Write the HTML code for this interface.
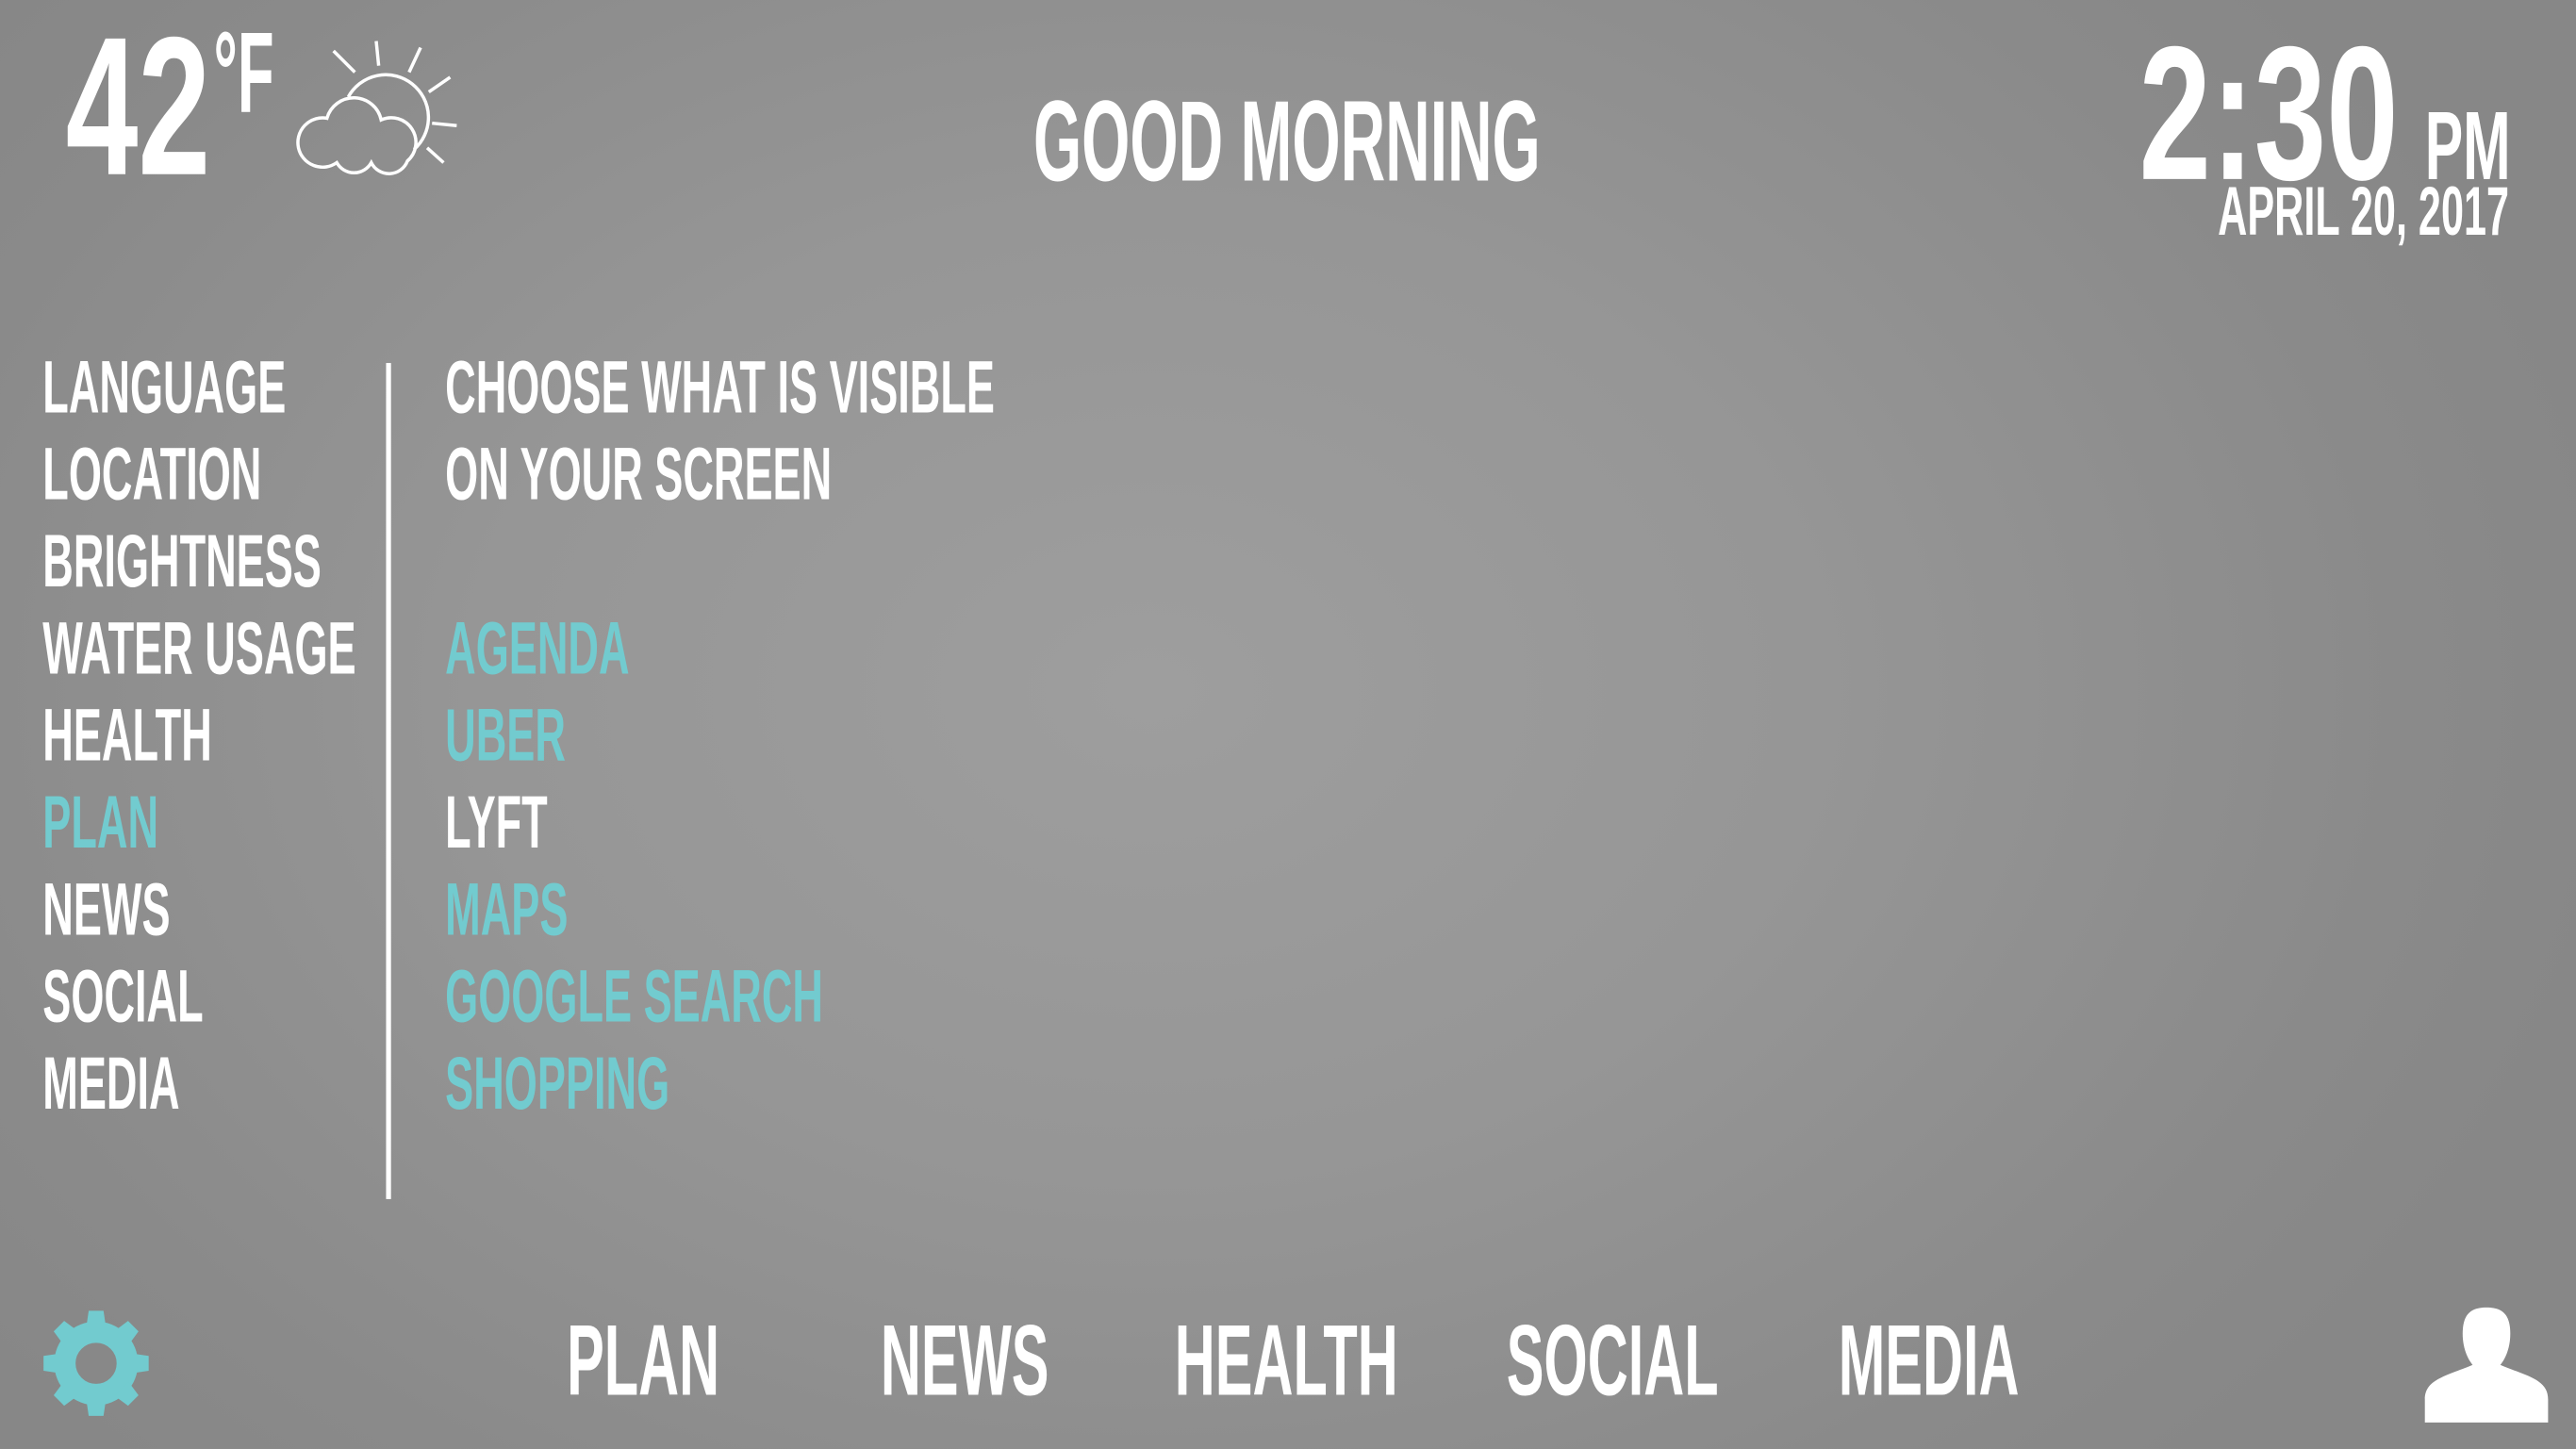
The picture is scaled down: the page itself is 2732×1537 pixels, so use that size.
<!DOCTYPE html>
<html><head><meta charset="utf-8"><style>
html,body{margin:0;padding:0;width:2732px;height:1536px;overflow:hidden;background:#8c8c8c;}
#s{position:absolute;left:0;top:0;width:1568px;height:882px;transform:scale(1.74235);transform-origin:0 0;
background:radial-gradient(ellipse 900px 650px at 700px 420px,#9e9e9e 0%,#969696 45%,#8a8a8a 85%,#878787 100%);}
.t{position:absolute;white-space:nowrap;font-family:"Liberation Sans",sans-serif;font-weight:bold;color:#fff;line-height:1;transform-origin:0 0;}
.m{font-size:45px;transform:scaleX(0.575);}
.c{color:#72cbcf;}
.n{font-size:61px;top:798px;transform:scaleX(0.56);}
</style></head><body><div id="s">
<div class="t" style="left:40px;top:5px;font-size:120px;transform:scaleX(0.66)">42</div>
<div class="t" style="left:130px;top:9px;font-size:70px;transform:scaleX(0.52)">°F</div>
<svg style="position:absolute;left:0;top:0" width="300" height="120" fill="none" stroke="#fff" stroke-width="2" stroke-linecap="butt">
<path d="M212,59 A26,26 0 1,1 252,91"/>
<path d="M205,99 A15,15 0 1,1 199,72 A17,17 0 0,1 232,73 A15,15 0 0,1 248,98 A12,12 0 0,1 226,99 A12,12 0 0,1 205,99 Z"/>
<path d="M203,31L216,44M229,25L230.5,40M256,29L249,44M274,47L261,56M263,75L278,76.5M260,90L270,99"/>
</svg>
<div class="t" style="left:629px;top:51px;font-size:70px;transform:scaleX(0.54)">GOOD MORNING</div>
<div class="t" style="left:1302px;top:11px;font-size:116px;transform:scaleX(0.68)">2:30</div>
<div class="t" style="left:1476px;top:60px;font-size:59px;transform:scaleX(0.59)">PM</div>
<div class="t" style="left:1350px;top:108px;font-size:42px;transform:scaleX(0.59)">APRIL 20, 2017</div>

<div class="t m" style="left:26px;top:213px">LANGUAGE</div>
<div class="t m" style="left:26px;top:266px">LOCATION</div>
<div class="t m" style="left:26px;top:319px">BRIGHTNESS</div>
<div class="t m" style="left:26px;top:372px">WATER USAGE</div>
<div class="t m" style="left:26px;top:425px">HEALTH</div>
<div class="t m c" style="left:26px;top:478px">PLAN</div>
<div class="t m" style="left:26px;top:531px">NEWS</div>
<div class="t m" style="left:26px;top:584px">SOCIAL</div>
<div class="t m" style="left:26px;top:637px">MEDIA</div>
<div style="position:absolute;left:235px;top:221px;width:3px;height:509px;background:#fff"></div>
<div class="t m" style="left:271px;top:213px">CHOOSE WHAT IS VISIBLE</div>
<div class="t m" style="left:271px;top:266px">ON YOUR SCREEN</div>
<div class="t m c" style="left:271px;top:372px">AGENDA</div>
<div class="t m c" style="left:271px;top:425px">UBER</div>
<div class="t m" style="left:271px;top:478px">LYFT</div>
<div class="t m c" style="left:271px;top:531px">MAPS</div>
<div class="t m c" style="left:271px;top:584px">GOOGLE SEARCH</div>
<div class="t m c" style="left:271px;top:637px">SHOPPING</div>

<div class="t n" style="left:345px">PLAN</div>
<div class="t n" style="left:536px">NEWS</div>
<div class="t n" style="left:715px">HEALTH</div>
<div class="t n" style="left:917px">SOCIAL</div>
<div class="t n" style="left:1119px">MEDIA</div>

<svg style="position:absolute;left:0;top:780px" width="120" height="100">
<g transform="translate(58.5,50)" fill="#72cbcf">
<circle r="19" fill="none" stroke="#72cbcf" stroke-width="13"/>
<g id="tt"><path d="M-6,-22 L-4.5,-32 L4.5,-32 L6,-22Z"/></g>
<use href="#tt" transform="rotate(45)"/><use href="#tt" transform="rotate(90)"/><use href="#tt" transform="rotate(135)"/>
<use href="#tt" transform="rotate(180)"/><use href="#tt" transform="rotate(225)"/><use href="#tt" transform="rotate(270)"/><use href="#tt" transform="rotate(315)"/>
</g></svg>
<svg style="position:absolute;left:1460px;top:780px" width="108" height="100">
<g transform="translate(-1460,-780)" fill="#fff">
<path d="M1499,812 C1499,800 1504,796 1513.5,796 C1523,796 1528,800 1528,812 C1528,822 1524,829 1521,832 L1506,832 C1503,829 1499,822 1499,812Z"/>
<path d="M1476,866 L1476,852 C1476,840 1488,838 1505,831 L1522,831 C1539,838 1551,840 1551,852 L1551,866 Z"/>
</g></svg>
</div></body></html>
